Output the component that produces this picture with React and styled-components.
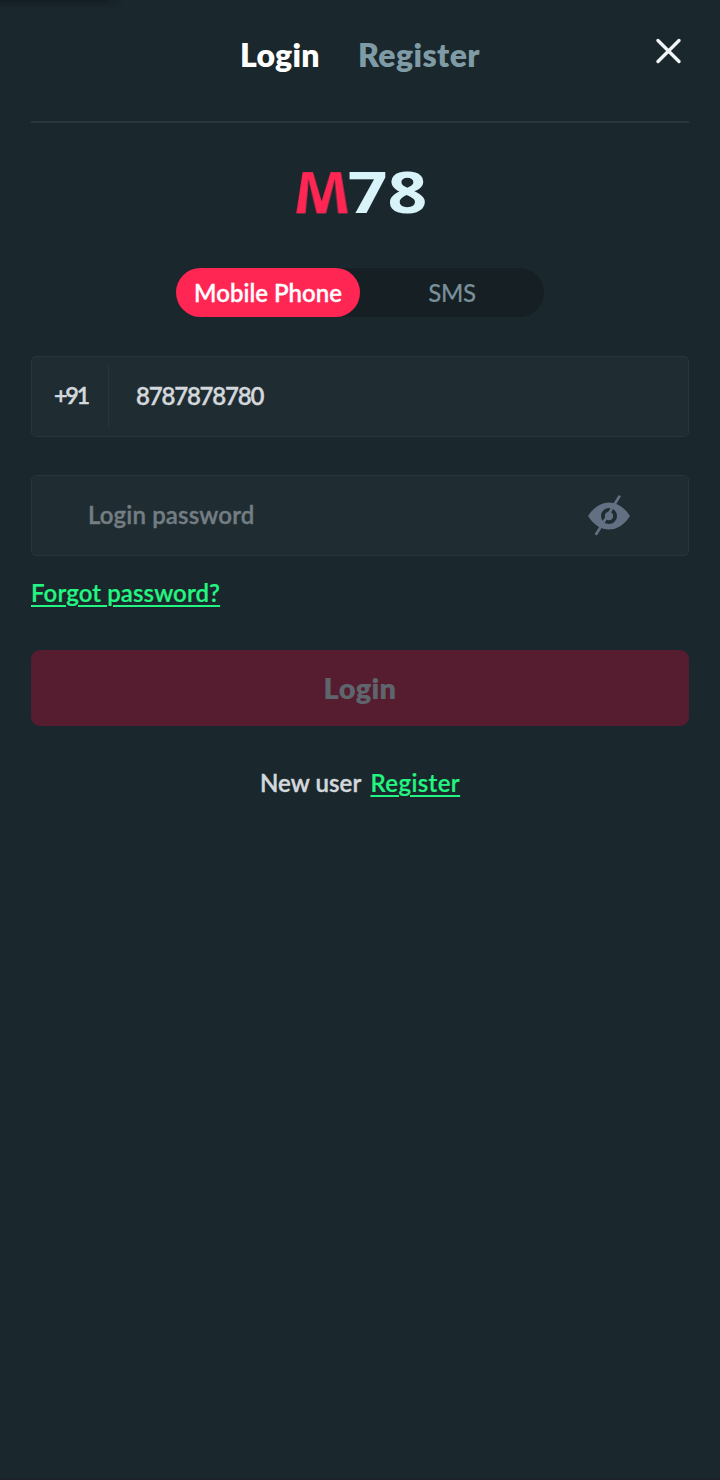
import { useState } from "react";
import styled, { createGlobalStyle } from "styled-components";

const GlobalStyle = createGlobalStyle`
  * {
    box-sizing: border-box;
  }

  body {
    margin: 0;
    background: #1a272c;
    font-family: Lato, "Open Sans", sans-serif;
  }

  button, input {
    font-family: inherit;
    border: none;
    outline: none;
    padding: 0;
    background: none;
  }
`;

const Page = styled.main`
  min-height: 1480px;
  padding: 0 31px;
  background: #1a272c;
  border-bottom: 2px solid #1e2329;
`;

const Shade = styled.div`
  position: absolute;
  top: 0;
  left: 0;
  width: 122px;
  height: 8px;
  background: linear-gradient(#131e23, #131e2300);
  mask-image: linear-gradient(to right, #000 85%, transparent);
`;

const Header = styled.header`
  display: grid;
  grid-template-columns: 1fr auto 1fr;
  align-items: center;
  height: 123px;
  padding-bottom: 11px;
  border-bottom: 2px solid #2a363c;
`;

const Tabs = styled.nav`
  grid-column: 2;
  display: flex;
  gap: 38px;
`;

const Tab = styled.button`
  width: ${({ $width }) => $width};
  color: ${({ $active }) => ($active ? "#ffffff" : "#7f9ba5")};
  font-size: 32px;
  font-weight: 800;
  line-height: 40px;
  letter-spacing: ${({ $spacing }) => $spacing};
  white-space: nowrap;
  text-align: left;
`;

const CloseButton = styled.button`
  justify-self: end;
  width: 26px;
  height: 26px;
  margin: 0 8px 8px 0;

  svg {
    display: block;
  }
`;

const Logo = styled.div`
  display: flex;
  justify-content: space-between;
  width: 130px;
  height: 57px;
  margin: 41px auto 47px;
  font-family: "Open Sans", "Noto Sans", sans-serif;
  font-size: 57px;
  font-weight: 700;
  line-height: 57px;
`;

const LogoLetter = styled.span`
  width: 52px;
  color: #ff2654;
  transform: translateY(-1px) perspective(100px) rotateX(32deg) scale(1.17, 1.56);
  transform-origin: 50% 49px;
`;

const LogoDigits = styled.span`
  color: #d9f3fb;
  transform: translate(2px, -1px) scale(1.22, 1.02);
  transform-origin: right;
`;

const Switch = styled.div`
  display: flex;
  width: 368px;
  height: 49px;
  margin: 0 auto 39px;
  border-radius: 25px;
  background: #162024;
`;

const SwitchItem = styled.button`
  flex: 1;
  border-radius: 25px;
  background: ${({ $active }) => ($active ? "#ff2654" : "transparent")};
  color: ${({ $active }) => ($active ? "#ffffff" : "#78909a")};
  font-size: 24px;
  font-weight: ${({ $active }) => ($active ? 600 : 500)};
  letter-spacing: ${({ $spacing }) => $spacing};
  -webkit-text-stroke: ${({ $active }) => ($active ? "0.3px" : "0.1px")} currentColor;
`;

const Field = styled.div`
  display: flex;
  align-items: center;
  height: 81px;
  border: 1px solid #27363b;
  border-radius: 5px;
  background: #1f2c31;
`;

const PhoneField = styled(Field)`
  margin-bottom: 38px;
`;

const Prefix = styled.span`
  display: flex;
  align-items: center;
  width: 77px;
  height: 63px;
  padding: 0 0 3px 22px;
  border-right: 1px solid #27363b;
  color: #d3d8dc;
  font-size: 23.5px;
  font-weight: 600;
  letter-spacing: -2.4px;
  -webkit-text-stroke: 0.4px currentColor;
`;

const Input = styled.input`
  flex: 1;
  min-width: 0;
  height: 100%;
  padding: 0 0 3px ${({ $indent }) => $indent};
  color: #d3d8dc;
  font-size: 24px;
  font-weight: 600;
  letter-spacing: ${({ $spacing }) => $spacing};
  -webkit-text-stroke: 0.4px currentColor;

  &::placeholder {
    color: #737d82;
    opacity: 1;
  }
`;

const EyeButton = styled.button`
  width: 42px;
  height: 42px;
  margin-right: 58px;

  svg {
    display: block;
  }
`;

const Link = styled.a`
  color: #24f582;
  font-size: 24px;
  font-weight: 600;
  letter-spacing: ${({ $spacing }) => $spacing};
  text-decoration: underline;
  text-decoration-thickness: 2px;
  text-underline-offset: 3px;
  -webkit-text-stroke: 0.2px currentColor;
`;

const ForgotRow = styled.div`
  height: 94px;
  padding-top: 22px;
  line-height: 30px;
`;

const SubmitButton = styled.button`
  display: block;
  width: 100%;
  height: 76px;
  padding-bottom: 2px;
  border-radius: 9px;
  background: #561d30;
  color: #5f656d;
  font-size: 29px;
  font-weight: 800;
  letter-spacing: 0.3px;
`;

const Footer = styled.p`
  display: flex;
  justify-content: center;
  gap: 9px;
  margin: 42px 0 0;
  color: #d3d8dc;
  font-size: 24px;
  font-weight: 600;
  line-height: 30px;
`;

const FooterText = styled.span`
  letter-spacing: 0.1px;
  -webkit-text-stroke: 0.4px currentColor;
`;

const CloseIcon = () => (
  <svg width="26" height="26" viewBox="0 0 26 26" fill="none">
    <path d="M3 2.500 24 23.500M24 2.500 3 23.500" stroke="#f1f4f5" strokeWidth="3.3" strokeLinecap="round" />
  </svg>
);

const EyeOffIcon = () => (
  <svg width="42" height="42" viewBox="0 0 42 42">
    <path
      d="M0 21C6 12 13 7.500 21 7.500S36 12 42 21C36 30 29 34.500 21 34.500S6 30 0 21ZM21 13a8 8 0 1 0 0 16 8 8 0 0 0 0-16Z"
      fill="#637083"
      fillRule="evenodd"
    />
    <path d="M31.300 1.500 8.300 39" stroke="#637083" strokeWidth="2.600" strokeLinecap="round" />
    <circle cx="21" cy="21" r="4.200" fill="#637083" />
  </svg>
);

const App = () => {
  const [mode, setMode] = useState("phone");
  const [phone, setPhone] = useState("8787878780");
  const [password, setPassword] = useState("");

  return (
    <>
      <GlobalStyle />
      <Shade />
      <Page>
        <Header>
          <Tabs>
            <Tab $active $width="80px" $spacing="0.2px">Login</Tab>
            <Tab $width="122px" $spacing="0.4px">Register</Tab>
          </Tabs>
          <CloseButton aria-label="Close">
            <CloseIcon />
          </CloseButton>
        </Header>
        <Logo>
          <LogoLetter>M</LogoLetter>
          <LogoDigits>78</LogoDigits>
        </Logo>
        <Switch>
          <SwitchItem $active={mode === "phone"} $spacing="0px" onClick={() => setMode("phone")}>
            Mobile Phone
          </SwitchItem>
          <SwitchItem $active={mode === "sms"} $spacing="-0.3px" onClick={() => setMode("sms")}>
            SMS
          </SwitchItem>
        </Switch>
        <PhoneField>
          <Prefix>+91</Prefix>
          <Input $indent="27px" $spacing="-1.2px" value={phone} onChange={(e) => setPhone(e.target.value)} />
        </PhoneField>
        <Field>
          <Input
            type="password"
            placeholder="Login password"
            $indent="56px"
            $spacing="0.15px"
            value={password}
            onChange={(e) => setPassword(e.target.value)}
          />
          <EyeButton aria-label="Show password">
            <EyeOffIcon />
          </EyeButton>
        </Field>
        <ForgotRow>
          <Link $spacing="0.1px">Forgot password?</Link>
        </ForgotRow>
        <SubmitButton>Login</SubmitButton>
        <Footer>
          <FooterText>New user</FooterText>
          <Link $spacing="0.4px">Register</Link>
        </Footer>
      </Page>
    </>
  );
};

export default App;
